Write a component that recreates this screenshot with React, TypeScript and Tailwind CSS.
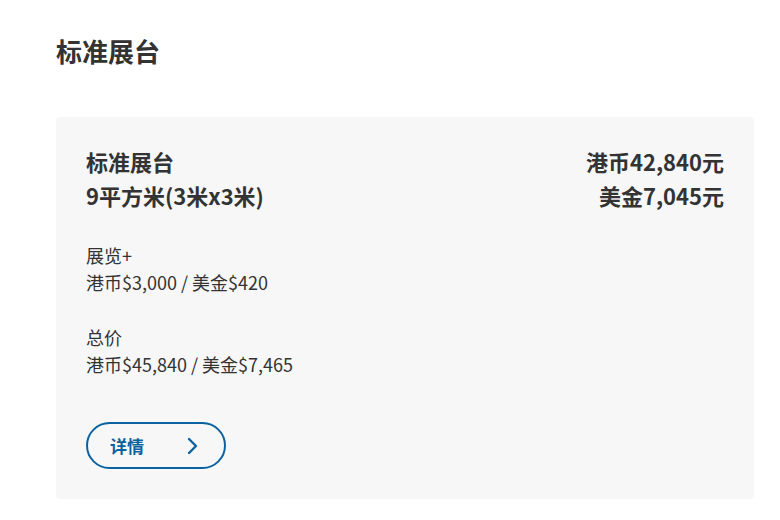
const font = { fontFamily: '"Noto Sans CJK SC", "Noto Sans", sans-serif' };

function Chevron() {
  return (
    <svg width="11" height="18" viewBox="0 0 11 18" fill="none" className="shrink-0">
      <polyline points="2,2 9,9 2,16" stroke="currentColor" strokeWidth="2.4" strokeLinecap="round" strokeLinejoin="round" />
    </svg>
  );
}

function PriceCard() {
  return (
    <div className="mt-[49px] w-[698px] rounded bg-[#f7f7f7] px-[30px] pt-[27px] pb-[30px]">
      <div className="flex items-start justify-between text-[22px] font-bold leading-[34px] text-[#333]">
        <div>
          <div>标准展台</div>
          <div>9平方米(3米x3米)</div>
        </div>
        <div className="text-right">
          <div>港币42,840元</div>
          <div>美金7,045元</div>
        </div>
      </div>

      <div className="mt-[30px] text-[18px] leading-[27px] text-[#333]">
        <div>展览+</div>
        <div>港币$3,000 / 美金$420</div>
      </div>

      <div className="mt-[28px] text-[18px] leading-[27px] text-[#333]">
        <div>总价</div>
        <div>港币$45,840 / 美金$7,465</div>
      </div>

      <button className="mt-[44px] flex h-[47px] w-[140px] items-center justify-between rounded-full border-2 border-[#0b62a0] pl-[22px] pr-[26px] text-[17px] font-bold text-[#0b62a0]">
        <span>详情</span>
        <Chevron />
      </button>
    </div>
  );
}

export default function App() {
  return (
    <div className="min-h-[520px] w-[780px] bg-white pl-[56px] pt-[34px]" style={font}>
      <h1 className="text-[26px] font-bold leading-[34px] text-[#333]">标准展台</h1>
      <PriceCard />
    </div>
  );
}
